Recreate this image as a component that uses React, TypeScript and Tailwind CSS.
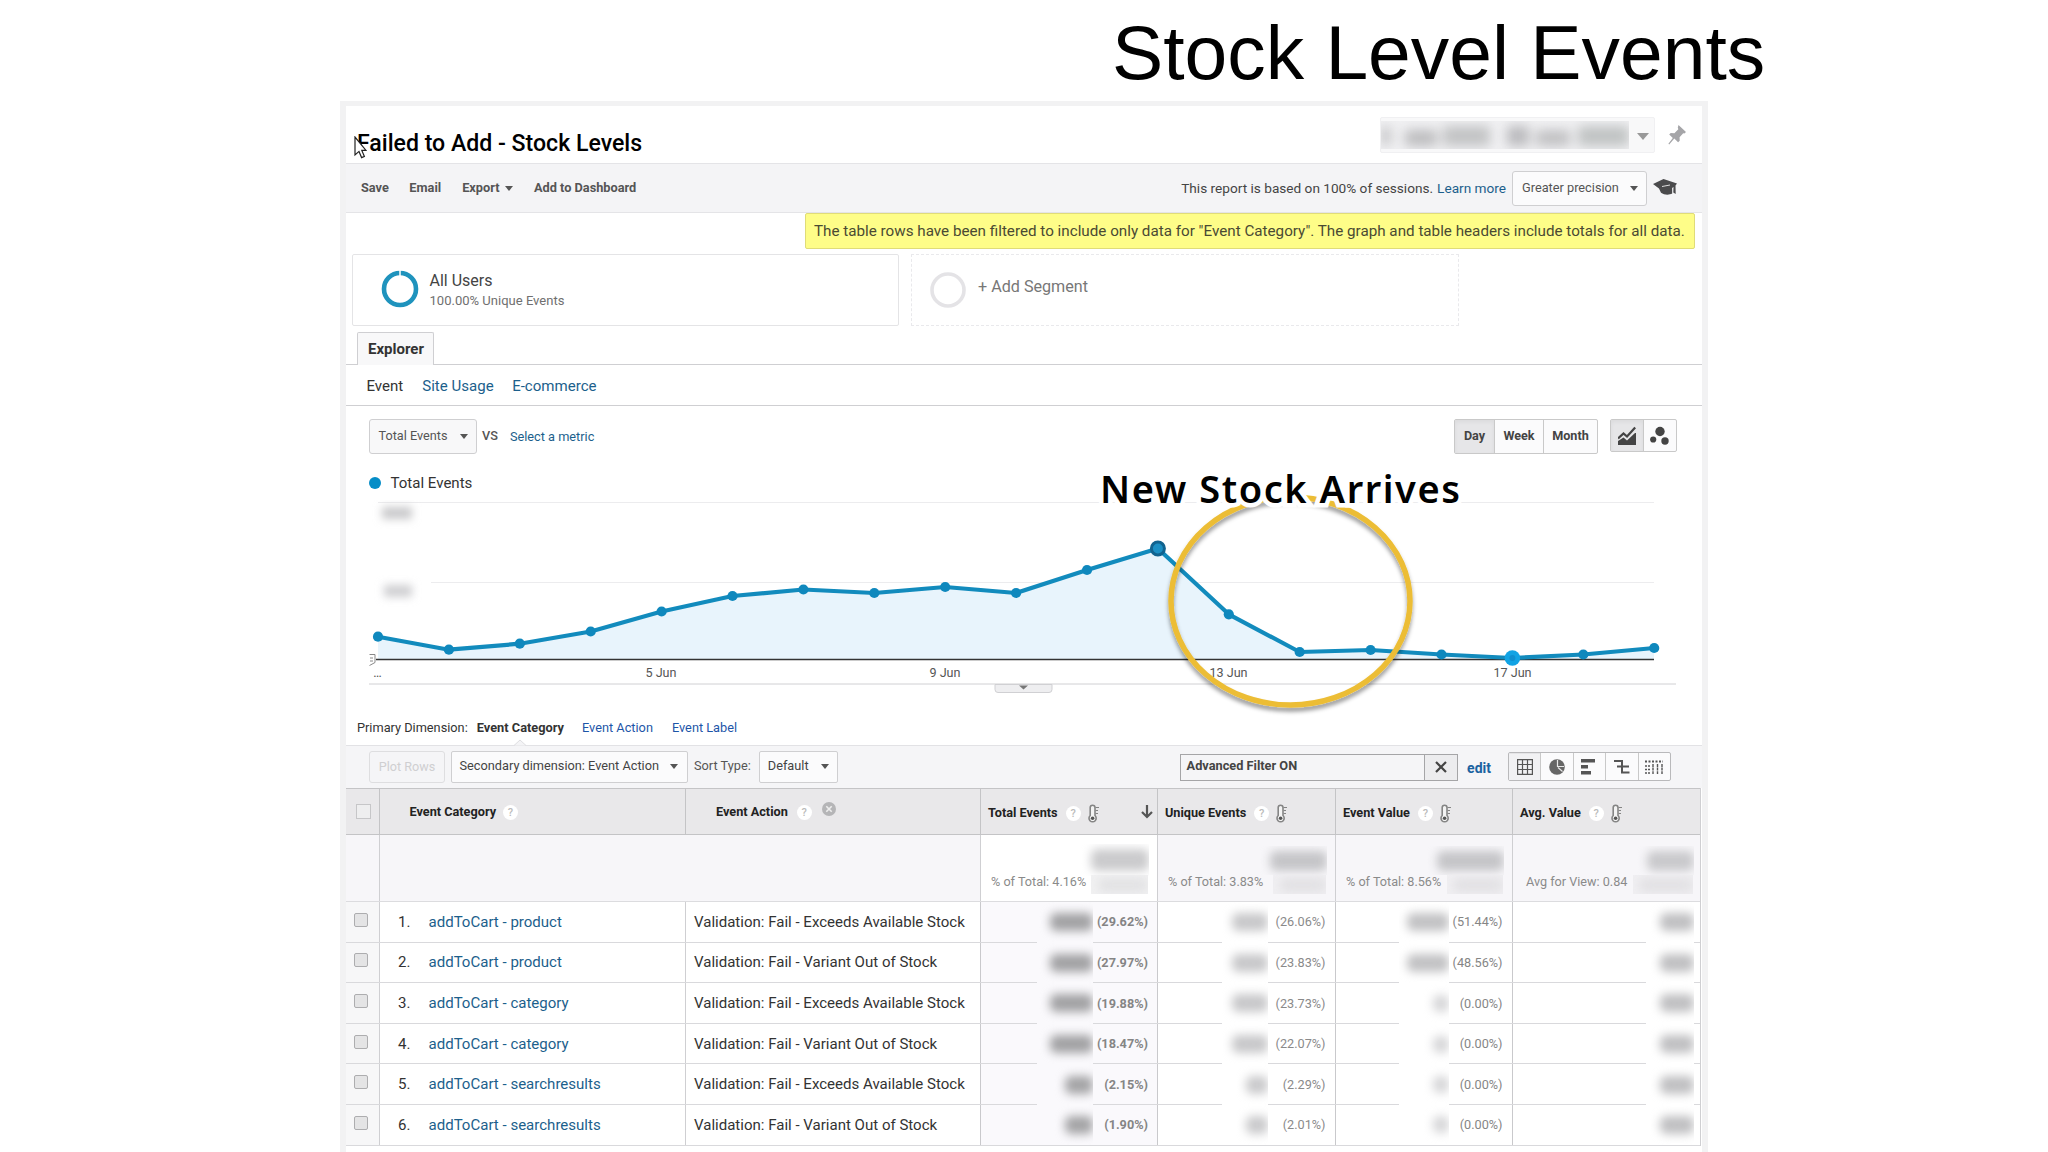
import type { ReactNode } from "react";

const DAYS = [636.7, 649.7, 643.7, 631.5, 611.5, 596, 589.5, 593, 587, 593, 570, 548.5, 614.3, 652, 650, 654.5, 658, 654.5, 648];
const STEP = 70.9;
const points = DAYS.map((y, i) => [32 + i * STEP, y - 500] as const);
const line = points.map(([x, y]) => `${x.toFixed(1)},${y.toFixed(1)}`).join(" ");

type Row = {
  category: string;
  action: string;
  total: string;
  unique: string;
  value: string;
};

const ROWS: Row[] = [
  { category: "addToCart - product", action: "Validation: Fail - Exceeds Available Stock", total: "(29.62%)", unique: "(26.06%)", value: "(51.44%)" },
  { category: "addToCart - product", action: "Validation: Fail - Variant Out of Stock", total: "(27.97%)", unique: "(23.83%)", value: "(48.56%)" },
  { category: "addToCart - category", action: "Validation: Fail - Exceeds Available Stock", total: "(19.88%)", unique: "(23.73%)", value: "(0.00%)" },
  { category: "addToCart - category", action: "Validation: Fail - Variant Out of Stock", total: "(18.47%)", unique: "(22.07%)", value: "(0.00%)" },
  { category: "addToCart - searchresults", action: "Validation: Fail - Exceeds Available Stock", total: "(2.15%)", unique: "(2.29%)", value: "(0.00%)" },
  { category: "addToCart - searchresults", action: "Validation: Fail - Variant Out of Stock", total: "(1.90%)", unique: "(2.01%)", value: "(0.00%)" },
];

const GRID = "grid grid-cols-[33px_306px_295px_177px_178px_177px_189px]";

function Caret({ className = "" }: { className?: string }) {
  return (
    <svg viewBox="0 0 8 5" className={`h-[5px] w-[8px] shrink-0 fill-[#555] ${className}`}>
      <path d="M0 0h8L4 5z" />
    </svg>
  );
}

function Help({ className = "" }: { className?: string }) {
  return (
    <span className={`flex size-[15px] shrink-0 items-center justify-center rounded-full bg-white text-[11px] leading-none font-medium text-[#bbb] ${className}`}>
      ?
    </span>
  );
}

function Thermometer() {
  return (
    <svg viewBox="0 0 11 19" className="ml-[7px] h-[19px] w-[11px] shrink-0" fill="none" stroke="#858585" strokeWidth="1.6">
      <path d="M2.2 11.5V3.6a2.4 2.4 0 0 1 4.8 0v7.9a3.6 3.6 0 1 1-4.8 0z" fill="#f3f3f3" />
      <path d="M7.5 3.5H11M7.5 6.5h2.5M7.5 9.5h2.5" strokeWidth="1.1" />
      <circle cx="4.6" cy="14.2" r="1.8" fill="#555" stroke="none" />
    </svg>
  );
}

function Smudge({ className, blob }: { className: string; blob: string }) {
  return (
    <span className={`absolute flex items-center overflow-hidden ${className}`}>
      <span className={`ml-auto block shrink-0 rounded-[6px] blur-[5px] ${blob}`} />
    </span>
  );
}

function MetricHead({ label, sorted = false }: { label: string; sorted?: boolean }) {
  return (
    <div className="flex items-center border-l border-[#c4c4c6] pt-[4px] pl-[7px]">
      <span>{label}</span>
      <Help className="ml-[8px]" />
      <Thermometer />
      {sorted && (
        <svg viewBox="0 0 12 14" className="mr-[4px] ml-auto h-[14px] w-[12px] -translate-y-[2px]" fill="none" stroke="#555" strokeWidth="2.2">
          <path d="M6 0v12M1 7l5 5 5-5" />
        </svg>
      )}
    </div>
  );
}

function TotalCell({ label, className = "", text = "left", children }: { label: string; className?: string; text?: string; children: ReactNode }) {
  return (
    <div className={`relative border-l border-[#cfcfd2] pt-[38px] text-[12.65px] leading-[18px] text-[#8a8a8a] ${text === "avg" ? "pl-[13px]" : "pl-[10px]"} ${className}`}>
      {label}
      {children}
    </div>
  );
}

function Divider() {
  return <span className="h-full w-px bg-[#c9c9c9]" />;
}

export default function App() {
  return (
    <div className="relative h-[1152px] w-[2048px] overflow-hidden bg-white font-['Roboto','Liberation_Sans',sans-serif] text-[#444]">
      <header className="flex h-[101px] items-center pt-[3px] pl-[1112px]">
        <h1 className="font-['Liberation_Sans',Arial,sans-serif] text-[76.8px] leading-none whitespace-nowrap text-black">Stock Level Events</h1>
      </header>

      <main className="relative ml-[340px] h-[1080px] w-[1368px] border-[6px] border-t-[5px] border-[#f2f2f3] bg-white whitespace-nowrap">
        <div className="relative flex h-[58px] items-center border-b border-[#e4e4e7] pl-[11px]">
          <h2 className="mt-[19px] text-[23.1px] leading-none font-medium text-black">Failed to Add - Stock Levels</h2>
          <svg viewBox="0 0 13 23" className="absolute top-[30px] left-[8px] h-[23px] w-[13px]" fill="white" stroke="#222" strokeWidth="1.2">
            <path d="M1 1v18l4-3.6 2.6 6.2 2.8-1.2-2.6-6H12z" />
          </svg>
          <div className="mt-[1px] mr-[12px] ml-auto flex h-[36px] w-[275px] items-center rounded-[2px] border border-[#f0f0f2] bg-[#f8f8f9]">
            <div className="relative h-[28px] w-[248px] overflow-hidden bg-[#f1f1f3]">
              <div className="mt-[4px] flex h-[22px] items-center blur-[6px]">
                <span className="h-[18px] w-[10px] bg-[#c4c4c6]" />
                <span className="ml-[14px] h-[16px] w-[32px] translate-y-[2px] bg-[#bcbcbe]" />
                <span className="ml-[6px] h-[20px] w-[48px] bg-[#c2c3c4]" />
                <span className="ml-[17px] h-[20px] w-[22px] bg-[#bababd]" />
                <span className="ml-[7px] h-[16px] w-[34px] translate-y-[2px] bg-[#c0c0c2]" />
                <span className="ml-[8px] h-[20px] w-[52px] bg-[#c0c3c3]" />
              </div>
            </div>
            <svg viewBox="0 0 12 7" className="mt-[2px] ml-[8px] h-[7px] w-[12px] fill-[#999]">
              <path d="M0 0h12L6 7z" />
            </svg>
          </div>
          <svg viewBox="0 0 20 22" className="mr-[15px] h-[22px] w-[20px] fill-[#a5a5a8]">
            <path d="M11.5 1 19 8l-1.6 1.6-1.200-.4-3.600 4 .1 3.600-1.600 1.500-3.800-3.700L2.200 20.500l-.8-.8 4.400-5.600-3.600-3.600 1.500-1.500 3.700.200 3.900-4-.5-1.800z" />
          </svg>
        </div>

        <div className="flex h-[49px] items-center border-b border-[#e4e4e7] bg-[#f4f4f6] text-[12.75px] leading-none font-bold text-[#555]">
          <span className="mt-[1px] ml-[15px]">Save</span>
          <span className="mt-[1px] ml-[20.500px]">Email</span>
          <span className="mt-[1px] ml-[21px]">Export</span>
          <Caret className="ml-[6px]" />
          <span className="mt-[1px] ml-[20.500px]">Add to Dashboard</span>
          <span className="mt-[1px] ml-auto text-[13.64px] font-normal text-[#444]">This report is based on 100% of sessions.</span>
          <span className="mt-[1px] ml-[4px] text-[13.64px] font-normal text-[#1c5f8c]">Learn more</span>
          <div className="ml-[6px] flex h-[35px] w-[135px] items-center rounded-[3px] border border-[#cfcfd1] bg-[#fbfbfc] pl-[9px] font-normal">
            Greater precision
            <Caret className="ml-[11px]" />
          </div>
          <svg viewBox="0 0 24 18" className="mr-[25px] ml-[6px] h-[18px] w-[24px] fill-[#4a4a4c]">
            <path d="M10.500 0 24 4.500l-1.500 2 .2 8.500-2.400-1.500.2-5.500-1.400 1 .1 5.500c-3 1.700-8 1.500-11.200-.7L6 9.400 0 5z" />
            <path d="M9 7.500 17 6" stroke="#ddd" strokeWidth="1" />
          </svg>
        </div>

        <div className="flex h-[36px] justify-end pr-[7px]">
          <div className="flex h-[36px] w-[890px] items-center rounded-[2px] border border-[#e0dc78] bg-[#fefd88] pt-[2px] pl-[8px] text-[15.21px] leading-none text-[#4a4a33]">
            The table rows have been filtered to include only data for &quot;Event Category&quot;. The graph and table headers include totals for all data.
          </div>
        </div>

        <div className="mt-[5px] ml-[6px] flex h-[72px] gap-[12px]">
          <div className="flex w-[547px] items-center rounded-[2px] border border-[#e4e4e6] pl-[28px]">
            <svg viewBox="0 0 38 38" className="size-[38px] -translate-y-[1px]">
              <circle cx="19" cy="19" r="16" fill="none" stroke="#1f93bd" strokeWidth="4.600" />
              <path d="M19 0v6" stroke="white" strokeWidth="1.500" />
            </svg>
            <div className="ml-[10.500px] flex flex-col">
              <span className="text-[16px] leading-[20px] text-[#444]">All Users</span>
              <span className="text-[13.04px] leading-[19px] text-[#707070]">100.00% Unique Events</span>
            </div>
          </div>
          <div className="flex w-[548px] items-center border border-dashed border-[#e9e9ec] pl-[17px]">
            <svg viewBox="0 0 38 38" className="size-[38px]">
              <circle cx="19" cy="19" r="16" fill="none" stroke="#e4e3e6" strokeWidth="3.600" />
            </svg>
            <span className="mb-[5px] ml-[11px] text-[16.15px] leading-none text-[#777]">+ Add Segment</span>
          </div>
        </div>

        <div className="mt-[6px] flex h-[33px] border-b border-[#cfcfd2] pl-[11px]">
          <div className="flex h-[33px] w-[77px] items-center justify-center rounded-t-[2px] border border-b-0 border-[#cfcfd2] bg-[#f8f8f9] pt-[2px] pl-[1px] text-[15.03px] leading-none font-bold text-[#333]">
            Explorer
          </div>
        </div>
        <nav className="flex h-[41px] items-center border-b border-[#cfcfd2] pt-[3px] pl-[20.500px] text-[15.05px] leading-none text-[#1c5f8c]">
          <span className="text-[#333]">Event</span>
          <span className="ml-[19px]">Site Usage</span>
          <span className="ml-[18.500px]">E-commerce</span>
        </nav>

        <div className="flex h-[60px] items-center pt-[1px] pl-[23px] text-[12.7px] leading-none">
          <div className="flex h-[35px] w-[108px] items-center rounded-[3px] border border-[#cfcfd1] bg-[#f8f8f9] pl-[8.500px] text-[#555]">
            Total Events
            <Caret className="ml-[12px]" />
          </div>
          <span className="ml-[5px] text-[12.7px] font-medium text-[#555]">VS</span>
          <span className="mt-[1px] ml-[12px] text-[12.75px] text-[#1c5f8c]">Select a metric</span>
          <div className="mr-[12px] ml-auto flex h-[35px] w-[144px] items-center rounded-[2px] border border-[#c9c9c9] bg-[#fbfbfc] text-[12.6px] font-bold text-[#444]">
            <span className="flex h-full w-[39px] items-center justify-center bg-[#e6e6e8] inset-shadow-sm">Day</span>
            <Divider />
            <span className="w-[48px] text-center">Week</span>
            <Divider />
            <span className="flex-1 text-center">Month</span>
          </div>
          <div className="mr-[25px] mb-[2px] flex h-[33px] w-[67px] items-center rounded-[2px] border border-[#c9c9c9] bg-[#fbfbfc]">
            <span className="flex h-full w-[32px] items-center justify-center bg-[#e6e6e8] inset-shadow-sm">
              <svg viewBox="0 0 18 19" className="h-[19px] w-[18px]" fill="#444">
                <path d="M0 19v-4l5.500-3.500 3.500 3 8-7.500h1v12z" />
                <path d="M0 12.500 5.500 7.500l3.500 3L17.200 1.500" fill="none" stroke="#444" strokeWidth="2.300" />
              </svg>
            </span>
            <Divider />
            <svg viewBox="0 0 19 20" className="ml-[6px] h-[20px] w-[19px]" fill="#444">
              <circle cx="10" cy="5.500" r="4.700" />
              <circle cx="3.200" cy="13.500" r="3.100" />
              <circle cx="15" cy="15" r="3.700" />
            </svg>
          </div>
        </div>

        <div className="flex h-[34px] items-center pl-[23px] text-[15.05px] leading-none text-[#333]">
          <span className="size-[12px] rounded-full bg-[#058dc7]" />
          <span className="mt-[2px] ml-[9.500px]">Total Events</span>
        </div>

        <svg viewBox="0 0 1356 195" className="block h-[195px] w-[1356px]">
          <defs>
            <filter id="soft" x="-50%" y="-100%" width="200%" height="300%">
              <feGaussianBlur stdDeviation="4.500" />
            </filter>
          </defs>
          <path d="M32 2.500H1308M85 82.500H1308" stroke="#ececee" />
          <rect x="36" y="7" width="30" height="12" fill="#c9c9cb" filter="url(#soft)" />
          <rect x="38" y="85" width="28" height="12" fill="#cfcfd1" filter="url(#soft)" />
          <polygon points={`32,159 ${line} 1308,159`} fill="#e8f4fc" />
          <path d="M30 159.500H1308" stroke="#333" strokeWidth="1.300" />
          <path d="M23.500 154.500h5.500v8l-5.500 3M24 158h3M24 161h3" fill="none" stroke="#888" />
          <polyline points={line} fill="none" stroke="#128bbd" strokeWidth="4.200" strokeLinejoin="round" />
          {points.map(([x, y], i) => (
            <circle key={i} cx={x} cy={y} r="5.100" fill="#0f88bd" />
          ))}
          <circle cx={points[11][0]} cy={points[11][1]} r="6.500" fill="#1b8fc4" stroke="#11638f" strokeWidth="3" />
          <circle cx={points[16][0]} cy={points[16][1]} r="7.800" fill="#12a3e4" />
          <circle cx={points[16][0]} cy={points[16][1]} r="3" fill="#0f8fd0" />
          <g fontSize="12.600" fill="#555" textAnchor="middle">
            <text x="315" y="176.500">5 Jun</text>
            <text x="599" y="176.500">9 Jun</text>
            <text x="882.500" y="176.500">13 Jun</text>
            <text x="1166.500" y="176.500">17 Jun</text>
            <text x="31.500" y="176.500">…</text>
          </g>
          <path d="M23 184H1330" stroke="#d0d0d3" />
          <path d="M649 184.500v5a3 3 0 0 0 3 3h51a3 3 0 0 0 3-3v-5z" fill="#eeeef0" stroke="#d0d0d3" />
          <path d="M673 185.500h9l-4.500 4z" fill="#777" />
        </svg>

        <div className="relative flex h-[51px] items-center border-b border-[#e2e2e5] pt-[17px] pl-[11px] text-[12.75px] leading-none text-[#1d55a8]">
          <span className="text-[#333]">Primary Dimension:</span>
          <span className="ml-[9px] text-[12.8px] font-bold text-[#333]">Event Category</span>
          <span className="ml-[18px]">Event Action</span>
          <span className="ml-[19px]">Event Label</span>
          <svg viewBox="0 0 12 7" className="absolute -bottom-px left-[168px] h-[7px] w-[12px]" fill="#f4f4f6" stroke="#dddde0">
            <path d="M0 6.500 6 1l6 5.500" />
          </svg>
        </div>

        <div className="flex h-[42px] items-center bg-[#f5f5f7] pb-[1px] pl-[23px] text-[12.75px] leading-none text-[#555]">
          <div className="flex h-[32px] w-[76px] items-center justify-center rounded-[3px] border border-[#dedee0] pt-[1px] text-[12.6px] text-[#cfcfd1]">Plot Rows</div>
          <div className="ml-[6px] flex h-[32px] w-[237px] items-center rounded-[2px] border border-[#cfcfd1] bg-[#fbfbfc] pl-[7.500px] text-[#444]">
            Secondary dimension: Event Action
            <Caret className="ml-[11px]" />
          </div>
          <span className="ml-[6px]">Sort Type:</span>
          <div className="ml-[8px] flex h-[32px] w-[79px] items-center rounded-[2px] border border-[#cfcfd1] bg-[#fbfbfc] pl-[8px] text-[#444]">
            Default
            <Caret className="ml-[12px]" />
          </div>
          <div className="mt-[1px] ml-auto flex h-[27px] w-[278px] border border-[#a5a5a7] bg-[#f5f5f7] font-bold text-[#444]">
            <span className="flex flex-1 items-center pb-[2px] pl-[5.500px]">Advanced Filter ON</span>
            <span className="flex w-[33px] items-center justify-center border-l border-[#a5a5a7] bg-[#ececee]">
              <svg viewBox="0 0 12 12" className="size-[12px]" fill="none" stroke="#444" strokeWidth="2.200">
                <path d="M1 1l10 10M11 1 1 11" />
              </svg>
            </span>
          </div>
          <span className="mt-[2px] ml-[9px] text-[14px] font-bold text-[#1b62a0]">edit</span>
          <div className="mr-[31px] ml-[17px] flex h-[29px] w-[163px] items-center rounded-[2px] border border-[#b9b9bb] bg-[#fbfbfc]">
            <span className="flex h-full w-[31px] items-center justify-center bg-[#f1f1f3] inset-shadow-2xs">
              <svg viewBox="0 0 16 16" className="size-[16px]" fill="none" stroke="#555" strokeWidth="1.200">
                <path d="M.6.6h14.800v14.800H.6zM5.500.6v14.800M10.500.6v14.800M.6 5.500h14.800M.6 10.500h14.800" />
              </svg>
            </span>
            <Divider />
            <span className="flex flex-1 justify-center">
              <svg viewBox="0 0 16 16" className="size-[16px]" fill="#666">
                <circle cx="8" cy="8" r="7.800" />
                <path d="M8.500 1v6.500h6.500M9 8.500l4.500 4" fill="none" stroke="#e8e8e8" strokeWidth="1.200" />
              </svg>
            </span>
            <Divider />
            <span className="flex flex-1 justify-center">
              <svg viewBox="0 0 16 16" className="size-[16px]" fill="#555">
                <path d="M0 0h14v3.500H0zM0 6h7v3.500H0zM0 12h10v3.500H0z" />
              </svg>
            </span>
            <Divider />
            <span className="flex flex-1 justify-center">
              <svg viewBox="0 0 16 16" className="size-[16px]" fill="none" stroke="#555" strokeWidth="2">
                <path d="M0 2h8v11.500h7.500M3 7.500h12" />
              </svg>
            </span>
            <Divider />
            <span className="flex flex-1 justify-center">
              <svg viewBox="0 0 18 14" className="h-[14px] w-[18px]" fill="none" stroke="#555">
                <path d="M0 1.500h18" strokeWidth="2" strokeDasharray="2 1.500" />
                <path d="M0 6h5M0 9.500h5M0 13h5" strokeWidth="1.600" strokeDasharray="2 1" />
                <path d="M8 4v10M12.500 4v10M17 4v10" strokeWidth="1.400" strokeDasharray="3 .6" />
              </svg>
            </span>
          </div>
        </div>

        <section className="w-[1355px] border-r border-[#cfcfd2]">
          <div className={`${GRID} h-[47px] border-y border-[#c4c4c6] bg-[#e9e8ea] text-[12.7px] leading-none font-bold text-[#222]`}>
            <div className="flex items-center pl-[10px]">
              <span className="size-[15px] border border-[#c6c6c8] bg-[#eeeeef]" />
            </div>
            <div className="flex items-center border-l border-[#c4c4c6] pt-[2px] pl-[29.500px]">
              Event Category
              <Help className="ml-[7px]" />
            </div>
            <div className="flex items-center border-l border-[#c4c4c6] pt-[2px] pl-[30px]">
              Event Action
              <Help className="ml-[9px]" />
              <svg viewBox="0 0 14 14" className="mb-[8px] ml-[10px] size-[14px]" stroke="#eee" strokeWidth="1.600">
                <circle cx="7" cy="7" r="7" fill="#b5b5b7" stroke="none" />
                <path d="m4.300 4.300 5.400 5.400M9.700 4.300 4.300 9.700" />
              </svg>
            </div>
            <MetricHead label="Total Events" sorted />
            <MetricHead label="Unique Events" />
            <MetricHead label="Event Value" />
            <MetricHead label="Avg. Value" />
          </div>

          <div className={`${GRID} h-[67px] border-b border-[#dcdcdf] bg-[#f7f6f9]`}>
            <div />
            <div className="col-span-2 border-l border-[#cfcfd2]" />
            <TotalCell label="% of Total: 4.16%" className="bg-white">
              <Smudge className="top-[9px] right-[8px] h-[32px] w-[72px]" blob="h-[22px] w-[58px] bg-[#cbcbcd]" />
              <Smudge className="top-[40px] right-[9px] h-[19px] w-[57px] bg-[#f1f1f2]" blob="h-[14px] w-[50px] bg-[#e2e2e4]" />
            </TotalCell>
            <TotalCell label="% of Total: 3.83%">
              <Smudge className="top-[11px] right-[8px] h-[29px] w-[70px]" blob="h-[20px] w-[57px] bg-[#c5c5c8]" />
              <Smudge className="top-[40px] right-[9px] h-[19px] w-[53px] bg-[#f0eff2]" blob="h-[14px] w-[46px] bg-[#e2e1e4]" />
            </TotalCell>
            <TotalCell label="% of Total: 8.56%">
              <Smudge className="top-[11px] right-[8px] h-[29px] w-[80px]" blob="h-[20px] w-[67px] bg-[#c5c5c8]" />
              <Smudge className="top-[40px] right-[9px] h-[19px] w-[56px] bg-[#f0eff2]" blob="h-[14px] w-[50px] bg-[#e2e1e4]" />
            </TotalCell>
            <TotalCell label="Avg for View: 0.84" text="avg">
              <Smudge className="top-[11px] right-[7px] h-[29px] w-[60px]" blob="h-[20px] w-[47px] bg-[#c9c9cc]" />
              <Smudge className="top-[40px] right-[8px] h-[19px] w-[60px] bg-[#f0eff2]" blob="h-[14px] w-[54px] bg-[#e2e1e4]" />
            </TotalCell>
          </div>

          {ROWS.map((row, i) => {
            const last = i === ROWS.length - 1;
            const small = i > 3;
            const clear = last ? "inset-y-0" : "top-0 -bottom-px";
            return (
              <div key={i} className={`${GRID} h-[40.6px] border-b border-[#d9d9dc] text-[15.04px] leading-none text-[#333]`}>
                <div className="flex items-center bg-[#f7f7f8] pb-[4px] pl-[8px]">
                  <span className="size-[14px] rounded-[2px] border border-[#adadaf] bg-[#e4e4e5]" />
                </div>
                <div className="flex items-center border-l border-[#cfcfd2] pt-[1px] pl-[18px]">
                  <span className="w-[30.500px]">{i + 1}.</span>
                  <span className="text-[#1c5f8c]">{row.category}</span>
                </div>
                <div className="flex items-center border-l border-[#cfcfd2] pt-[1px] pl-[8px]">{row.action}</div>
                <div className="relative flex items-center justify-end border-l border-[#c9c9cc] bg-[#faf9fc] pt-[2px] pr-[9px] text-[12.7px] font-bold text-[#858585]">
                  <Smudge className={`right-[64px] w-[56px] bg-[#faf9fc] ${clear}`} blob={small ? "h-[18px] w-[28px] bg-[#a4a4a6]" : "h-[18px] w-[43px] bg-[#a2a2a4]"} />
                  {row.total}
                </div>
                <div className="relative flex items-center justify-end border-l border-[#c9c9cc] pt-[2px] pr-[9.500px] text-[12.7px] text-[#8a8a8a]">
                  <Smudge className={`right-[67px] w-[46px] bg-white ${clear}`} blob={small ? "h-[18px] w-[22px] bg-[#cacacc]" : "h-[18px] w-[36px] bg-[#c8c8ca]"} />
                  {row.unique}
                </div>
                <div className="relative flex items-center justify-end border-l border-[#c9c9cc] pt-[2px] pr-[9.500px] text-[12.7px] text-[#858585]">
                  <Smudge className={`right-[63px] w-[50px] bg-white ${clear}`} blob={i > 1 ? "h-[17px] w-[16px] bg-[#d6d6d8]" : "h-[18px] w-[42px] bg-[#c2c2c4]"} />
                  {row.value}
                </div>
                <div className="relative border-l border-[#c9c9cc]">
                  <Smudge className={`right-[7px] w-[48px] bg-white ${clear}`} blob="h-[18px] w-[34px] bg-[#c0c0c2]" />
                </div>
              </div>
            );
          })}
        </section>
      </main>

      <svg viewBox="0 0 270 240" className="absolute top-[480px] left-[1156px] h-[240px] w-[270px]" fill="none">
        <defs>
          <filter id="drop" x="-10%" y="-10%" width="120%" height="120%">
            <feDropShadow dx="0" dy="4" stdDeviation="2" floodColor="#000" floodOpacity="0.400" />
          </filter>
        </defs>
        <ellipse cx="134.500" cy="121" rx="119.500" ry="104" stroke="#ecbd35" strokeWidth="5.500" filter="url(#drop)" />
      </svg>
      <div className="absolute top-[462px] left-[1100px] font-['Noto_Sans','Open_Sans',sans-serif] text-[38px] leading-[52px] font-semibold tracking-[1.550px] whitespace-nowrap text-black [-webkit-text-stroke:9px_white] [paint-order:stroke_fill]">
        New Stock Arrives
      </div>
    </div>
  );
}
